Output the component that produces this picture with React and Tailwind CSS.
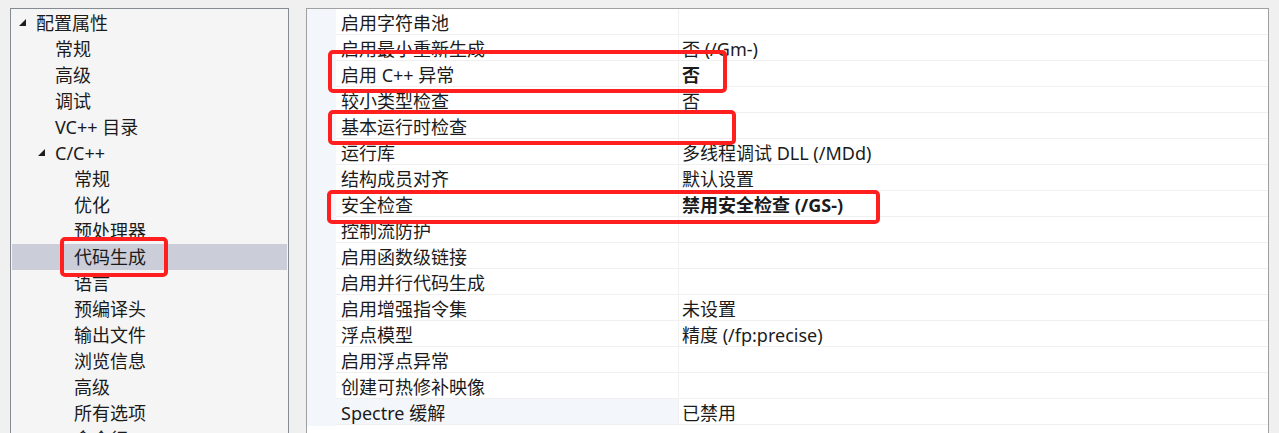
import React from "react";

const treeItems = [
  { label: "配置属性", level: 0, toggle: true },
  { label: "常规", level: 1 },
  { label: "高级", level: 1 },
  { label: "调试", level: 1 },
  { label: "VC++ 目录", level: 1 },
  { label: "C/C++", level: 1, toggle: true },
  { label: "常规", level: 2 },
  { label: "优化", level: 2 },
  { label: "预处理器", level: 2 },
  { label: "代码生成", level: 2, selected: true },
  { label: "语言", level: 2 },
  { label: "预编译头", level: 2 },
  { label: "输出文件", level: 2 },
  { label: "浏览信息", level: 2 },
  { label: "高级", level: 2 },
  { label: "所有选项", level: 2 },
  { label: "命令行", level: 2 },
];

const props = [
  { name: "启用字符串池", value: "" },
  { name: "启用最小重新生成", value: "否 (/Gm-)" },
  { name: "启用 C++ 异常", value: "否", bold: true },
  { name: "较小类型检查", value: "否" },
  { name: "基本运行时检查", value: "" },
  { name: "运行库", value: "多线程调试 DLL (/MDd)" },
  { name: "结构成员对齐", value: "默认设置" },
  { name: "安全检查", value: "禁用安全检查 (/GS-)", bold: true },
  { name: "控制流防护", value: "" },
  { name: "启用函数级链接", value: "" },
  { name: "启用并行代码生成", value: "" },
  { name: "启用增强指令集", value: "未设置" },
  { name: "浮点模型", value: "精度 (/fp:precise)" },
  { name: "启用浮点异常", value: "" },
  { name: "创建可热修补映像", value: "" },
  { name: "Spectre 缓解", value: "已禁用", active: true },
];

// small filled "expanded" arrow used by the tree
const Expander = () => (
  <svg width="8" height="8" viewBox="0 0 8 8" className="shrink-0">
    <polygon points="7,0 7,7 0,7" fill="#1e1e1e" />
  </svg>
);

const TreeRow = ({ item }) => {
  // text lands at x=36 (root), 55 (level 1), 74 (level 2)
  let pad = "pl-[62px]";
  if (item.level === 0) pad = "pl-[7px]";
  else if (item.level === 1) pad = item.toggle ? "pl-[26px]" : "pl-[43px]";
  return (
    <div
      className={`h-[26px] flex items-center leading-[28px] ${pad} ${
        item.selected ? "bg-[#cbcdd9]" : ""
      }`}
    >
      {item.toggle ? (
        <div className="w-[17px] flex items-center">
          <Expander />
        </div>
      ) : null}
      <span>{item.label}</span>
    </div>
  );
};

export default function App() {
  return (
    <div className="relative w-[1279px] h-[433px] overflow-hidden bg-[#f0f0f0] text-[18px] text-[#1b1b1b] font-['Noto_Sans','Noto_Sans_CJK_SC',sans-serif]">
      <div className="flex pt-2 pl-[10px]">
        {/* Tree */}
        <div className="w-[279px] h-[460px] border border-b-0 border-[#868a93] bg-[#f5f5f5] px-px pt-px overflow-hidden">
          {treeItems.map((item, i) => (
            <TreeRow key={i} item={item} />
          ))}
        </div>

        {/* Property grid */}
        <div className="ml-[17px] w-[963px] h-[460px] border border-b-0 border-[#a0a0a0] bg-white flex">
          <div className="w-[29px] h-[417px] bg-[#f3f6fb]" />
          <div className="flex-1">
            {props.map((p, i) => (
              <div key={i} className="flex h-[26px] border-b border-[#f0f0f0] overflow-hidden">
                <div
                  className={`w-[343px] pl-[5px] leading-[28px] border-r border-[#f0f0f0] whitespace-nowrap ${
                    p.active ? "bg-[#f3f6fb]" : ""
                  }`}
                >
                  {p.name}
                </div>
                <div className={`flex-1 pl-[3px] leading-[28px] whitespace-nowrap ${p.bold ? "font-bold" : ""}`}>
                  {p.value}
                </div>
              </div>
            ))}
          </div>
        </div>
      </div>

      {/* red annotation boxes */}
      <div className="absolute left-[60px] top-[237px] w-[108px] h-[40px] border-4 border-[#ff1f1f] rounded-[5px]" />
      <div className="absolute left-[328px] top-[50px] w-[399px] h-[43px] border-4 border-[#ff1f1f] rounded-[5px]" />
      <div className="absolute left-[328px] top-[110px] w-[408px] h-[35px] border-4 border-[#ff1f1f] rounded-[5px]" />
      <div className="absolute left-[327px] top-[190px] w-[553px] h-[34px] border-4 border-[#ff1f1f] rounded-[5px]" />
    </div>
  );
}
